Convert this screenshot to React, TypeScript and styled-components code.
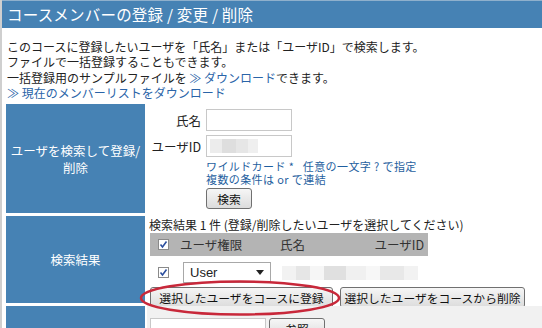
import React from "react";
import styled, { createGlobalStyle } from "styled-components";

const Global = createGlobalStyle`
  html, body { margin: 0; padding: 0; background: #fff; }
  body { font-family: "Noto Sans CJK JP", "Noto Sans", sans-serif; font-size: 12px; color: #222; }
`;

const Page = styled.div`
  width: 542px;
  height: 328px;
  overflow: hidden;
  position: relative;
  border-left: 2px solid #cfcfcf;
  box-sizing: border-box;
`;

const Header = styled.div`
  height: 28px;
  background: #4682b4;
  border-top: 1px solid #8fb0cc;
  box-sizing: border-box;
  color: #fff;
  font-size: 15.5px;
  line-height: 26px;
  padding-left: 5px;
  letter-spacing: 0.2px;
  white-space: nowrap;
`;

const Intro = styled.div`
  padding: 11px 0 0 5px;
  line-height: 15.3px;
  font-size: 12px;
  white-space: nowrap;
`;

const Link = styled.span`
  color: #2a64a8;
`;

const Table = styled.div`
  display: grid;
  grid-template-columns: 139px 1fr;
  grid-template-rows: 109px 87px 40px;
  gap: 3px 2px;
  margin: 4px 0 0 4px;
`;

const LabelCell = styled.div`
  background: #4682b4;
  color: #fff;
  font-size: 12.5px;
  line-height: 17px;
  display: flex;
  align-items: center;
  justify-content: center;
  text-align: center;
  white-space: nowrap;
`;

const ContentCell = styled.div<{ $bg?: string }>`
  background: ${(p) => p.$bg || "#fff"};
  padding: 0 0 0 2px;
  white-space: nowrap;
`;

const FormGrid = styled.div`
  display: grid;
  grid-template-columns: 52px auto;
  column-gap: 5px;
  row-gap: 4px;
  align-items: center;
  padding-top: 5px;
`;

const FieldLabel = styled.div`
  text-align: right;
  font-size: 12.5px;
  white-space: nowrap;
`;

const Input = styled.div<{ $w?: number }>`
  width: ${(p) => p.$w || 86}px;
  height: 22px;
  border: 1px solid #c8c8c8;
  box-sizing: border-box;
  background: #fff;
  display: flex;
  align-items: center;
  padding-left: 3px;
`;

const Blur = styled.div<{ $w: number; $c: string }>`
  width: ${(p) => p.$w}px;
  height: 14px;
  background: ${(p) => p.$c};
`;

const Hint = styled.div`
  grid-column: 2;
  color: #1f5fa0;
  font-size: 11px;
  line-height: 13px;
  margin-top: -1px;
  letter-spacing: 0.4px;
`;

const Button = styled.button<{ $w?: number }>`
  font-family: "Noto Sans CJK JP", sans-serif;
  font-size: 11.8px;
  height: 21px;
  padding: 0;
  ${(p) => (p.$w ? `width: ${p.$w}px;` : "")}
  border: 1px solid #707070;
  border-radius: 3px;
  background: linear-gradient(#f6f6f6, #dcdcdc);
  color: #111;
  line-height: 19px;
  white-space: nowrap;
  cursor: pointer;
`;

const SearchBtnWrap = styled.div`
  grid-column: 2;
  margin-top: -2px;
`;

const ResultTitle = styled.div`
  font-size: 12px;
  line-height: 15px;
  padding-top: 1px;
`;

const ResultTable = styled.div`
  width: 278px;
  margin: 1px 0 0 1px;
`;

const HeadRow = styled.div`
  display: grid;
  grid-template-columns: 30px 100px 70px 1fr;
  align-items: center;
  height: 23px;
  background: #b4b4b4;
  font-size: 12.5px;
  color: #333;
`;

const DataRow = styled.div`
  display: grid;
  grid-template-columns: 31px 101px 1fr;
  align-items: center;
  height: 32px;
  padding-top: 1px;
  box-sizing: border-box;
`;

const Check = styled.span`
  width: 11px;
  height: 11px;
  border: 1px solid #8a8a8a;
  background: #fff;
  margin-left: 8px;
  display: inline-flex;
  align-items: center;
  justify-content: center;
  box-sizing: border-box;
`;

const Select = styled.div`
  width: 88px;
  height: 21px;
  border: 1px solid #a8a8a8;
  box-sizing: border-box;
  display: flex;
  align-items: center;
  justify-content: space-between;
  padding: 0 6px 0 6px;
  font-family: "Liberation Sans", sans-serif;
  font-size: 13px;
  margin-left: 2px;
`;

const Arrow = styled.span`
  width: 0;
  height: 0;
  border-left: 4px solid transparent;
  border-right: 4px solid transparent;
  border-top: 5px solid #222;
`;

const BlurRow = styled.div`
  display: flex;
  align-items: center;
`;

const HeadId = styled.span`
  text-align: right;
  padding-right: 4px;
`;

const Buttons = styled.div`
  display: flex;
  gap: 7px;
  padding-left: 1px;
  margin-top: -1px;
`;

const BottomRow = styled.div`
  display: flex;
  gap: 3px;
  padding: 12px 0 0 1px;
`;

const Ellipse = styled.svg`
  position: absolute;
  left: 136px;
  top: 279px;
`;

const CheckMark = () => (
  <svg width="9" height="9" viewBox="0 0 9 9">
    <path d="M1.5 4.5 L3.5 7 L7.5 1.5" stroke="#2c4f9e" strokeWidth="1.6" fill="none" />
  </svg>
);

export default function App() {
  return (
    <Page>
      <Global />
      <Header>コースメンバーの登録 / 変更 / 削除</Header>
      <Intro>
        <div>このコースに登録したいユーザを「氏名」または「ユーザID」で検索します。</div>
        <div>ファイルで一括登録することもできます。</div>
        <div>
          一括登録用のサンプルファイルを <Link>≫ ダウンロード</Link>できます。
        </div>
        <div>
          <Link>≫ 現在のメンバーリストをダウンロード</Link>
        </div>
      </Intro>
      <Table>
        <LabelCell>ユーザを検索して登録/<br />削除</LabelCell>
        <ContentCell>
          <FormGrid>
            <FieldLabel>氏名</FieldLabel>
            <Input />
            <FieldLabel>ユーザID</FieldLabel>
            <Input>
              <Blur $w={12} $c="#ececec" />
              <Blur $w={14} $c="#dedede" />
              <Blur $w={12} $c="#e6e6e6" />
              <Blur $w={10} $c="#efefef" />
            </Input>
            <Hint>
              ワイルドカード *&nbsp;&nbsp; 任意の一文字 ? で指定
              <br />
              複数の条件は or で連結
            </Hint>
            <SearchBtnWrap>
              <Button $w={46}>検索</Button>
            </SearchBtnWrap>
          </FormGrid>
        </ContentCell>
        <LabelCell>検索結果</LabelCell>
        <ContentCell>
          <ResultTitle>検索結果 1 件 (登録/削除したいユーザを選択してください)</ResultTitle>
          <ResultTable>
            <HeadRow>
              <Check><CheckMark /></Check>
              <span>ユーザ権限</span>
              <span>氏名</span>
              <HeadId>ユーザID</HeadId>
            </HeadRow>
            <DataRow>
              <Check><CheckMark /></Check>
              <Select>
                <span>User</span>
                <Arrow />
              </Select>
              <BlurRow>
                <Blur $w={14} $c="#f2f2f2" />
                <Blur $w={14} $c="#e6e6e6" />
                <Blur $w={14} $c="#f6f6f6" />
                <Blur $w={22} $c="#e0e0e0" />
                <Blur $w={20} $c="#f0f0f0" />
                <Blur $w={14} $c="#f7f7f7" />
                <Blur $w={24} $c="#e8e8e8" />
                <Blur $w={14} $c="#f2f2f2" />
              </BlurRow>
            </DataRow>
          </ResultTable>
          <Buttons>
            <Button $w={183}>選択したユーザをコースに登録</Button>
            <Button $w={185}>選択したユーザをコースから削除</Button>
          </Buttons>
        </ContentCell>
        <LabelCell />
        <ContentCell $bg="#f1f1f1">
          <BottomRow>
            <Input $w={116} />
            <Button $w={56}>参照</Button>
          </BottomRow>
        </ContentCell>
      </Table>
      <Ellipse width="205" height="40" viewBox="0 0 205 40">
        <ellipse cx="102" cy="19" rx="99" ry="16.5" fill="none" stroke="#c8283a" strokeWidth="2.5" />
      </Ellipse>
    </Page>
  );
}
